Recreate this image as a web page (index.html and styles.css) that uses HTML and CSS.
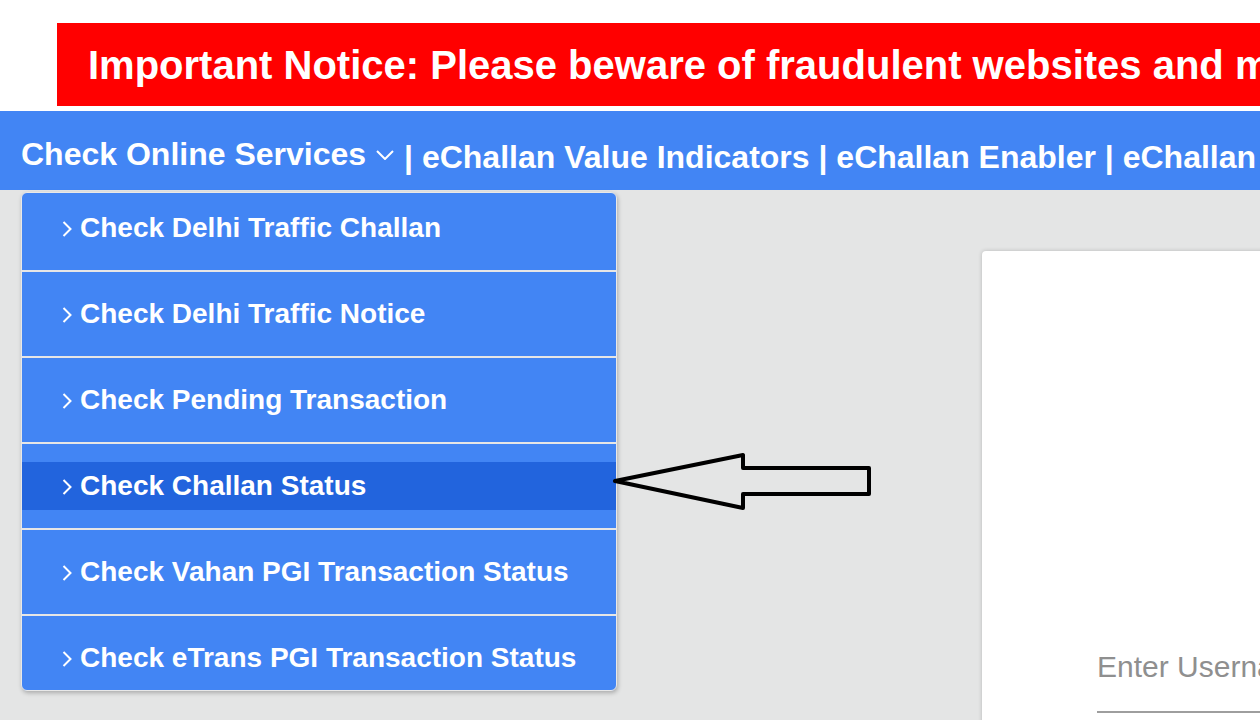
FILE: index.html
```html
<!DOCTYPE html>
<html lang="en">
<head>
    <meta charset="UTF-8">
    <meta name="viewport" content="width=device-width, initial-scale=1.0">
    <title>eChallan - Online Services</title>
    <link rel="stylesheet" href="styles.css">
</head>
<body>

<header class="notice-wrap">
    <div class="notice">Important Notice: Please beware of fraudulent websites and messages asking for challan payments</div>
</header>

<nav class="topnav">
    <span class="nav-services">Check Online Services
        <svg class="caret-down" width="18" height="10" viewBox="0 0 18 10"><polyline points="1,1 9,9 17,1" fill="none" stroke="#fff" stroke-width="2"/></svg>
    </span>
    <span class="nav-links">| eChallan Value Indicators | eChallan Enabler | eChallan Dashboard</span>
</nav>

<main class="content">
    <div class="dropdown">
        <ul class="menu">
            <li class="menu-item"><a href="#"><svg class="chev" width="10" height="16" viewBox="0 0 10 16"><polyline points="1.5,1 8.5,8 1.5,15" fill="none" stroke="#fff" stroke-width="2"/></svg>Check Delhi Traffic Challan</a></li>
            <li class="menu-item"><a href="#"><svg class="chev" width="10" height="16" viewBox="0 0 10 16"><polyline points="1.5,1 8.5,8 1.5,15" fill="none" stroke="#fff" stroke-width="2"/></svg>Check Delhi Traffic Notice</a></li>
            <li class="menu-item"><a href="#"><svg class="chev" width="10" height="16" viewBox="0 0 10 16"><polyline points="1.5,1 8.5,8 1.5,15" fill="none" stroke="#fff" stroke-width="2"/></svg>Check Pending Transaction</a></li>
            <li class="menu-item active"><a href="#"><svg class="chev" width="10" height="16" viewBox="0 0 10 16"><polyline points="1.5,1 8.5,8 1.5,15" fill="none" stroke="#fff" stroke-width="2"/></svg>Check Challan Status</a></li>
            <li class="menu-item"><a href="#"><svg class="chev" width="10" height="16" viewBox="0 0 10 16"><polyline points="1.5,1 8.5,8 1.5,15" fill="none" stroke="#fff" stroke-width="2"/></svg>Check Vahan PGI Transaction Status</a></li>
            <li class="menu-item"><a href="#"><svg class="chev" width="10" height="16" viewBox="0 0 10 16"><polyline points="1.5,1 8.5,8 1.5,15" fill="none" stroke="#fff" stroke-width="2"/></svg>Check eTrans PGI Transaction Status</a></li>
        </ul>
    </div>

    <!-- annotation arrow pointing at the active menu entry -->
    <svg class="pointer-arrow" width="266" height="64" viewBox="0 0 266 64">
        <polygon points="5,31 133,5 133,18 259,18 259,44 133,44 133,58" fill="none" stroke="#000" stroke-width="4" stroke-linejoin="round"/>
    </svg>

    <section class="login-card">
        <input class="login-input" type="text" placeholder="Enter Username">
    </section>
</main>

</body>
</html>
```

FILE: styles.css
```css
:root {
    --nav-blue: #4285f4;
    --active-blue: #2264dd;
    --page-grey: #e4e5e5;
    --notice-red: #ff0000;
}

html, body {
    margin: 0;
    height: 100%;
    overflow: hidden;
    font-family: "Liberation Sans", Arial, sans-serif;
    background-color: var(--page-grey);
}

.notice-wrap {
    background: #fff;
    padding: 23px 0 5px 57px;
}

.notice {
    background: var(--notice-red);
    color: #fff;
    font-size: 40px;
    font-weight: bold;
    white-space: nowrap;
    height: 83px;
    line-height: 85px;
    padding-left: 31px;
    overflow: hidden;
}

.topnav {
    background: var(--nav-blue);
    color: #fff;
    height: 79px;
    box-sizing: border-box;
    display: flex;
    align-items: flex-start;
    padding: 25px 0 0 21px;
    font-size: 32px;
    line-height: 37px;
    font-weight: bold;
    white-space: nowrap;
    overflow: hidden;
}

.nav-services {
    display: flex;
    align-items: center;
}

.caret-down {
    margin-left: 10px;
}

.nav-links {
    margin-left: 10px;
    margin-top: 3px;
}

.content {
    position: relative;
    display: flow-root;
    height: 530px;
}

.dropdown {
    position: absolute;
    top: 2px;
    left: 21px;
    width: 594px;
    height: 497px;
    background: var(--nav-blue);
    border: 1px solid #e8e8e8;
    border-radius: 6px;
    box-shadow: 1px 2px 4px rgba(0, 0, 0, 0.25);
    overflow: hidden;
    z-index: 2;
}

.menu {
    list-style: none;
    margin: -7px 0 0;
    padding: 0;
}

.menu-item {
    padding: 18px 0;
    border-top: 2px solid #e6e6e6;
}

.menu-item:first-child {
    border-top: none;
}

.menu-item a {
    display: flex;
    align-items: center;
    height: 48px;
    padding-left: 40px;
    color: #fff;
    text-decoration: none;
    font-size: 28px;
    font-weight: bold;
    white-space: nowrap;
}

.menu-item.active a {
    background: var(--active-blue);
}

.chev {
    margin-right: 8px;
    margin-top: 2px;
}

.pointer-arrow {
    position: absolute;
    left: 610px;
    top: 260px;
    z-index: 3;
}

.login-card {
    margin-left: 982px;
    margin-top: 61px;
    width: 400px;
    height: 600px;
    background: #fff;
    border-radius: 4px;
    box-shadow: 0 0 4px rgba(0, 0, 0, 0.2);
    padding: 399px 0 0 115px;
    box-sizing: border-box;
}

.login-input {
    display: block;
    width: 300px;
    border: none;
    border-bottom: 2px solid #9e9e9e;
    background: transparent;
    font-family: "Liberation Sans", Arial, sans-serif;
    font-size: 30px;
    line-height: 34px;
    height: 34px;
    padding: 0 0 27px 0;
    box-sizing: content-box;
    outline: none;
}

.login-input::placeholder {
    color: #8f8f8f;
}
```
